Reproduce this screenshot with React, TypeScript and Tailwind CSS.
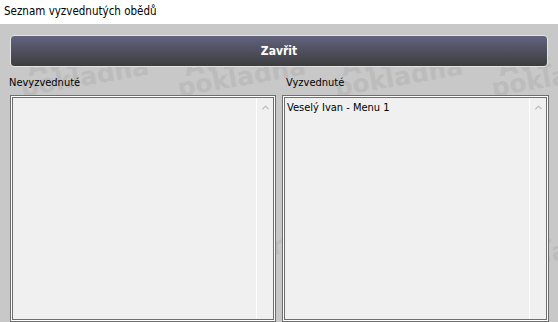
import { ChevronUp } from 'lucide-react';

const font = { fontFamily: '"DejaVu Sans Condensed", "Liberation Sans", sans-serif' };

// watermark marks: rows x cols, drawn behind the window content
const marks: { x: number; y: number }[] = [];
for (let r = 0; r < 2; r++) {
  for (let c = 0; c < 4; c++) {
    marks.push({ x: 18 + 157 * c, y: 73 + 175 * r });
  }
}

function Watermark() {
  return (
    <svg className="absolute inset-0 w-full h-full pointer-events-none" aria-hidden>
      {marks.map((m, i) => (
        <g
          key={i}
          transform={`translate(${m.x} ${m.y - 24}) rotate(-10)`}
          fontFamily='"DejaVu Sans", sans-serif'
          fontWeight="bold"
          fontSize="25"
          fill="#bcbcbc"
        >
          <text x="10" y="5">AVE</text>
          <text x="0" y="24">pokladna</text>
        </g>
      ))}
    </svg>
  );
}

function ListBox({ items }: { items: string[] }) {
  return (
    <div className="flex-1 border border-[#6e6e6e] p-px bg-white">
      <div className="h-full border border-[#6e6e6e] bg-[#f0f0f0] flex">
        <div className="flex-1 pt-[2px] pl-[2px] text-[11px] text-black leading-[15px]">
          {items.map((it) => (
            <div key={it}>{it}</div>
          ))}
        </div>
        <div className="w-[17px] border-l border-white flex justify-center pt-[4px]">
          <ChevronUp className="w-[11px] h-[11px] text-[#b8b8b8]" strokeWidth={2.5} />
        </div>
      </div>
    </div>
  );
}

export default function App() {
  return (
    <div className="w-[558px] h-[322px] overflow-hidden flex flex-col bg-white" style={font}>
      <div className="h-[24px] shrink-0 px-[4px] flex items-center text-[11.5px] text-black">
        Seznam vyzvednutých obědů
      </div>
      <div className="relative flex-1 bg-[#c8c8c8] flex flex-col pl-[10px] pr-[9px] pt-[11px]">
        <Watermark />
        <button className="relative h-[32px] w-[538px] rounded-[4px] border border-[#e4e4e4] bg-gradient-to-b from-[#63637f] to-[#3d3d3f] text-white font-bold text-[12px]">
          Zavřit
        </button>
        <div className="relative flex-1 grid grid-cols-[266px_267px] gap-x-[6px] mt-[8px]">
          <div className="flex flex-col">
            <div className="text-[11px] text-black h-[20px] leading-[16px] -ml-px">Nevyzvednuté</div>
            <ListBox items={[]} />
          </div>
          <div className="flex flex-col">
            <div className="text-[11px] text-black h-[20px] leading-[16px] pl-[4px]">Vyzvednuté</div>
            <ListBox items={['Veselý Ivan - Menu 1']} />
          </div>
        </div>
      </div>
    </div>
  );
}
